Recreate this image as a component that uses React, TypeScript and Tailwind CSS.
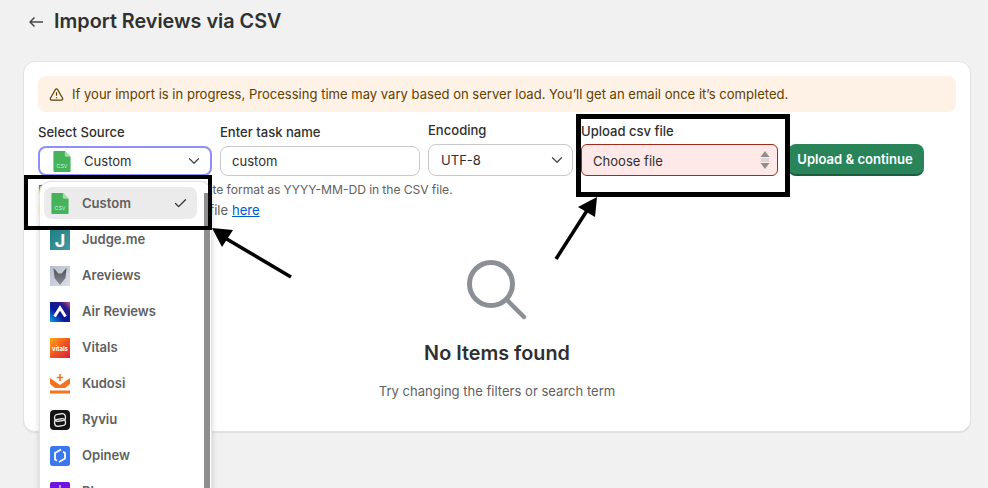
import React from "react";
import { Check, ChevronDown, TriangleAlert } from "lucide-react";

const CsvIcon = () => (
  <svg viewBox="0 0 18 22" className="w-[18px] h-[21px] shrink-0">
    <path d="M1 0h11l6 6v15a1 1 0 0 1-1 1H1a1 1 0 0 1-1-1V1a1 1 0 0 1 1-1z" fill="#45b35a" />
    <path d="M12 0l6 6h-5a1 1 0 0 1-1-1z" fill="#a5dcae" />
    <text x="9" y="18" textAnchor="middle" fontSize="5.5" fill="#d6f2da" fontFamily="Inter">
      CSV
    </text>
  </svg>
);

const Judge = () => (
  <div className="w-5 h-5 bg-gradient-to-br from-[#1f7f83] to-[#3f9ca3] flex items-center justify-center text-white text-[18px] font-bold">
    J
  </div>
);

const Areviews = () => (
  <svg viewBox="0 0 20 20" className="w-5 h-5">
    <defs>
      <linearGradient id="ar" x1="0" y1="0" x2="1" y2="1">
        <stop offset="0" stopColor="#b4bccb" />
        <stop offset="1" stopColor="#dde1e8" />
      </linearGradient>
      <linearGradient id="arf" x1="0" y1="0" x2="0" y2="1">
        <stop offset="0" stopColor="#4d5058" />
        <stop offset="1" stopColor="#8a8d96" />
      </linearGradient>
    </defs>
    <rect width="20" height="20" fill="url(#ar)" />
    <path d="M3.5 2l5 5.5h3l5-5.5 -1 10-5.5 7-5.5-7z" fill="url(#arf)" />
  </svg>
);

const AirReviews = () => (
  <svg viewBox="0 0 20 20" className="w-5 h-5">
    <defs>
      <linearGradient id="air" x1="0" y1="1" x2="1" y2="0">
        <stop offset="0" stopColor="#00a6ee" />
        <stop offset="0.4" stopColor="#0a1a9c" />
        <stop offset="0.75" stopColor="#251a8a" />
        <stop offset="1" stopColor="#d6587a" />
      </linearGradient>
    </defs>
    <rect width="20" height="20" fill="url(#air)" />
    <path d="M4.5 14.5L10 6l5.5 8.5" fill="none" stroke="#fff" strokeWidth="3" />
  </svg>
);

const Vitals = () => (
  <div className="w-5 h-5 bg-gradient-to-br from-[#ffa31a] via-[#f0541e] to-[#d6173f] flex items-center justify-center text-white text-[6px] font-bold">
    vitals
  </div>
);

const Kudosi = () => (
  <svg viewBox="0 0 20 20" className="w-5 h-5">
    <path d="M0 4l10 7 10-7v6l-5 4H5l-5-4z" fill="#f9701c" />
    <path d="M10 0v7M6.8 3.5h6.4" stroke="#f9701c" strokeWidth="1.6" />
    <rect y="16.5" width="20" height="3" fill="#f9701c" />
  </svg>
);

const Ryviu = () => (
  <svg viewBox="0 0 20 20" className="w-5 h-5">
    <rect width="20" height="20" rx="4" fill="#141414" />
    <rect x="4.5" y="4" width="11" height="7" rx="3.4" fill="none" stroke="#e8e8e8" strokeWidth="1.3" transform="rotate(-8 10 7.5)" />
    <rect x="4.5" y="9" width="11" height="7" rx="3.4" fill="none" stroke="#e8e8e8" strokeWidth="1.3" transform="rotate(-8 10 12.5)" />
  </svg>
);

const Opinew = () => (
  <svg viewBox="0 0 20 20" className="w-5 h-5">
    <rect width="20" height="20" rx="2.5" fill="#3b78f0" />
    <path d="M11 3.5L5 7v6.5l2 1.2M9 16l6-3.5V7l-2-1.2" fill="none" stroke="#fff" strokeWidth="1.8" />
  </svg>
);

const Last = () => (
  <svg viewBox="0 0 20 20" className="w-5 h-5">
    <rect width="20" height="20" rx="2" fill="#6a16e0" />
    <path d="M10 3v8M7 6v5M13 6v5" stroke="#d9c6fa" strokeWidth="1.5" />
  </svg>
);

const sources = [
  { name: "Judge.me", icon: <Judge /> },
  { name: "Areviews", icon: <Areviews /> },
  { name: "Air Reviews", icon: <AirReviews /> },
  { name: "Vitals", icon: <Vitals /> },
  { name: "Kudosi", icon: <Kudosi /> },
  { name: "Ryviu", icon: <Ryviu /> },
  { name: "Opinew", icon: <Opinew /> },
  { name: "Plum", icon: <Last /> },
];

const App = () => {
  return (
    <div className="relative w-[988px] h-[488px] overflow-hidden bg-[#f1f1f1] font-['Inter',sans-serif] text-[13.05px] text-[#303030]">
      <div className="flex items-center h-[44px] pl-[29px] gap-[11px]">
        <svg viewBox="0 0 14 10" className="w-[14px] h-[10px]" fill="none" stroke="#4a4a4a" strokeWidth="1.5">
          <path d="M14 5H1M5.5.5L1 5l4.5 4.5" />
        </svg>
        <h1 className="text-[19.8px] font-semibold text-[#303030]">Import Reviews via CSV</h1>
      </div>

      <div className="mt-[17px] ml-[23px] w-[948px] h-[371px] bg-white rounded-xl border border-[#e3e3e3] shadow-[0_1px_1px_rgba(0,0,0,0.08)] px-[14px] pt-[14px]">
        <div className="flex items-center gap-[8px] h-[36px] rounded-lg bg-[#fef1e5] pl-[11px] text-[#5e4200]">
          <TriangleAlert className="w-[15px] h-[15px] text-[#5e4200]" strokeWidth={2} />
          <span className="pt-[1px]">If your import is in progress, Processing time may vary based on server load. You’ll get an email once it’s completed.</span>
        </div>

        <div className="flex items-start mt-[10px]">
          <div className="w-[182px]">
            <div className="h-[24px] font-medium leading-[20px]">Select Source</div>
            <div className="flex items-center w-[174px] h-[30px] rounded-lg border-2 border-[#8f8ff8] pl-[13px] pr-[7px]">
              <CsvIcon />
              <span className="ml-[13px] flex-1 pt-[1px]">Custom</span>
              <ChevronDown className="w-[18px] h-[18px] text-[#4a4a4a]" strokeWidth={1.75} />
            </div>
            <p className="mt-[3px] leading-[21px] text-[12.15px] text-[#616161] whitespace-nowrap [word-spacing:-0.35px]">Please make sure you enter date format as YYYY-MM-DD in the CSV file.</p>
            <p className="leading-[21px] text-[#616161] whitespace-nowrap [word-spacing:0.25px]">
              Download sample template file{" "}
              <a className="text-[#005bd3] underline">here</a>
            </p>
          </div>
          <div className="w-[208px]">
            <div className="h-[24px] font-medium leading-[20px]">Enter task name</div>
            <div className="flex items-center w-[200px] h-[30px] rounded-lg border border-[#c9c9c9] pl-[11px] pt-[1px]">custom</div>
          </div>
          <div className="w-[153px] -mt-[2px]">
            <div className="h-[24px] font-medium leading-[20px]">Encoding</div>
            <div className="flex items-center justify-between w-[145px] h-[32px] rounded-lg border border-[#c9c9c9] pl-[12px] pr-[6px]">
              <span className="pt-[1px]">UTF-8</span>
              <ChevronDown className="w-[18px] h-[18px] text-[#4a4a4a]" strokeWidth={1.75} />
            </div>
          </div>
          <div className="w-[207px] -mt-[1px]">
            <div className="h-[23px] font-medium leading-[20px]">Upload csv file</div>
            <div className="flex items-center justify-between w-[197px] h-[32px] rounded-md border border-[#9f2b1c] bg-[#fee9e8] pl-[11px] pr-[7px]">
              <span className="pt-[3px]">Choose file</span>
              <svg viewBox="0 0 10 18" className="w-[10px] h-[18px]">
                <path d="M5 0l4.5 6H.5z" fill="#8e8e8e" />
                <path d="M1 8h8M1 10h8" stroke="#bdbdbd" strokeWidth="1" />
                <path d="M5 18l4.5-6H.5z" fill="#8e8e8e" />
              </svg>
            </div>
          </div>
          <button className="mt-[22px] w-[136px] h-[32px] rounded-lg bg-[#29845a] border-b-2 border-[#1a5c3e] pt-[2px] pr-[2px] text-white font-semibold">
            Upload &amp; continue
          </button>
        </div>

        <div className="flex flex-col items-center mt-[39px]">
          <svg viewBox="0 0 60 60" className="w-[60px] h-[60px]">
            <circle cx="24" cy="24" r="21.5" fill="none" stroke="#8a9095" strokeWidth="5" />
            <path d="M40 40l17 17" stroke="#8a9095" strokeWidth="4.5" strokeLinecap="round" />
          </svg>
          <h2 className="mt-[19px] text-[19.8px] font-semibold leading-[28px]">No Items found</h2>
          <p className="mt-[14px] text-[#616161] leading-[20px]">Try changing the filters or search term</p>
        </div>
      </div>

      {/* open source dropdown */}
      <div className="absolute left-[39px] top-[181px] w-[173px] h-[320px] rounded-t-xl bg-white border border-[#e3e3e3] shadow-[0_2px_6px_rgba(0,0,0,0.15)] overflow-hidden pl-[4px]">
        <div className="flex items-center w-[153px] h-[32px] mt-[5px] rounded-lg bg-[#ebebeb] pl-[7px] pr-[9px]">
          <CsvIcon />
          <span className="ml-[13px] flex-1 pt-[1px] font-semibold text-[#616161]">Custom</span>
          <Check className="w-[15px] h-[15px] text-[#303030]" strokeWidth={2} />
        </div>
        <div className="pt-[3px]">
          {sources.map((s) => (
            <div key={s.name} className="flex items-center h-[36px] pl-[6px]">
              {s.icon}
              <span className="ml-[12px] font-semibold text-[#616161]">{s.name}</span>
            </div>
          ))}
        </div>
        <div className="absolute right-[1px] top-[11px] w-[6px] h-[320px] bg-[#8e8e8e]" />
      </div>

      {/* annotations */}
      <div className="absolute left-[24px] top-[175px] w-[188px] h-[55px] border-[4px] border-black" />
      <div className="absolute left-[576px] top-[114px] w-[214px] h-[83px] border-[5px] border-black" />
      <svg className="absolute left-0 top-0 w-[988px] h-[488px] pointer-events-none" viewBox="0 0 988 488">
        <path d="M291 277L225 238" stroke="#000" strokeWidth="3.5" />
        <path d="M212 228l21 2-11 17z" fill="#000" />
        <path d="M556 259L588 209" stroke="#000" strokeWidth="3.5" />
        <path d="M597 197l-19 10 17 10z" fill="#000" />
      </svg>
    </div>
  );
};

export default App;
